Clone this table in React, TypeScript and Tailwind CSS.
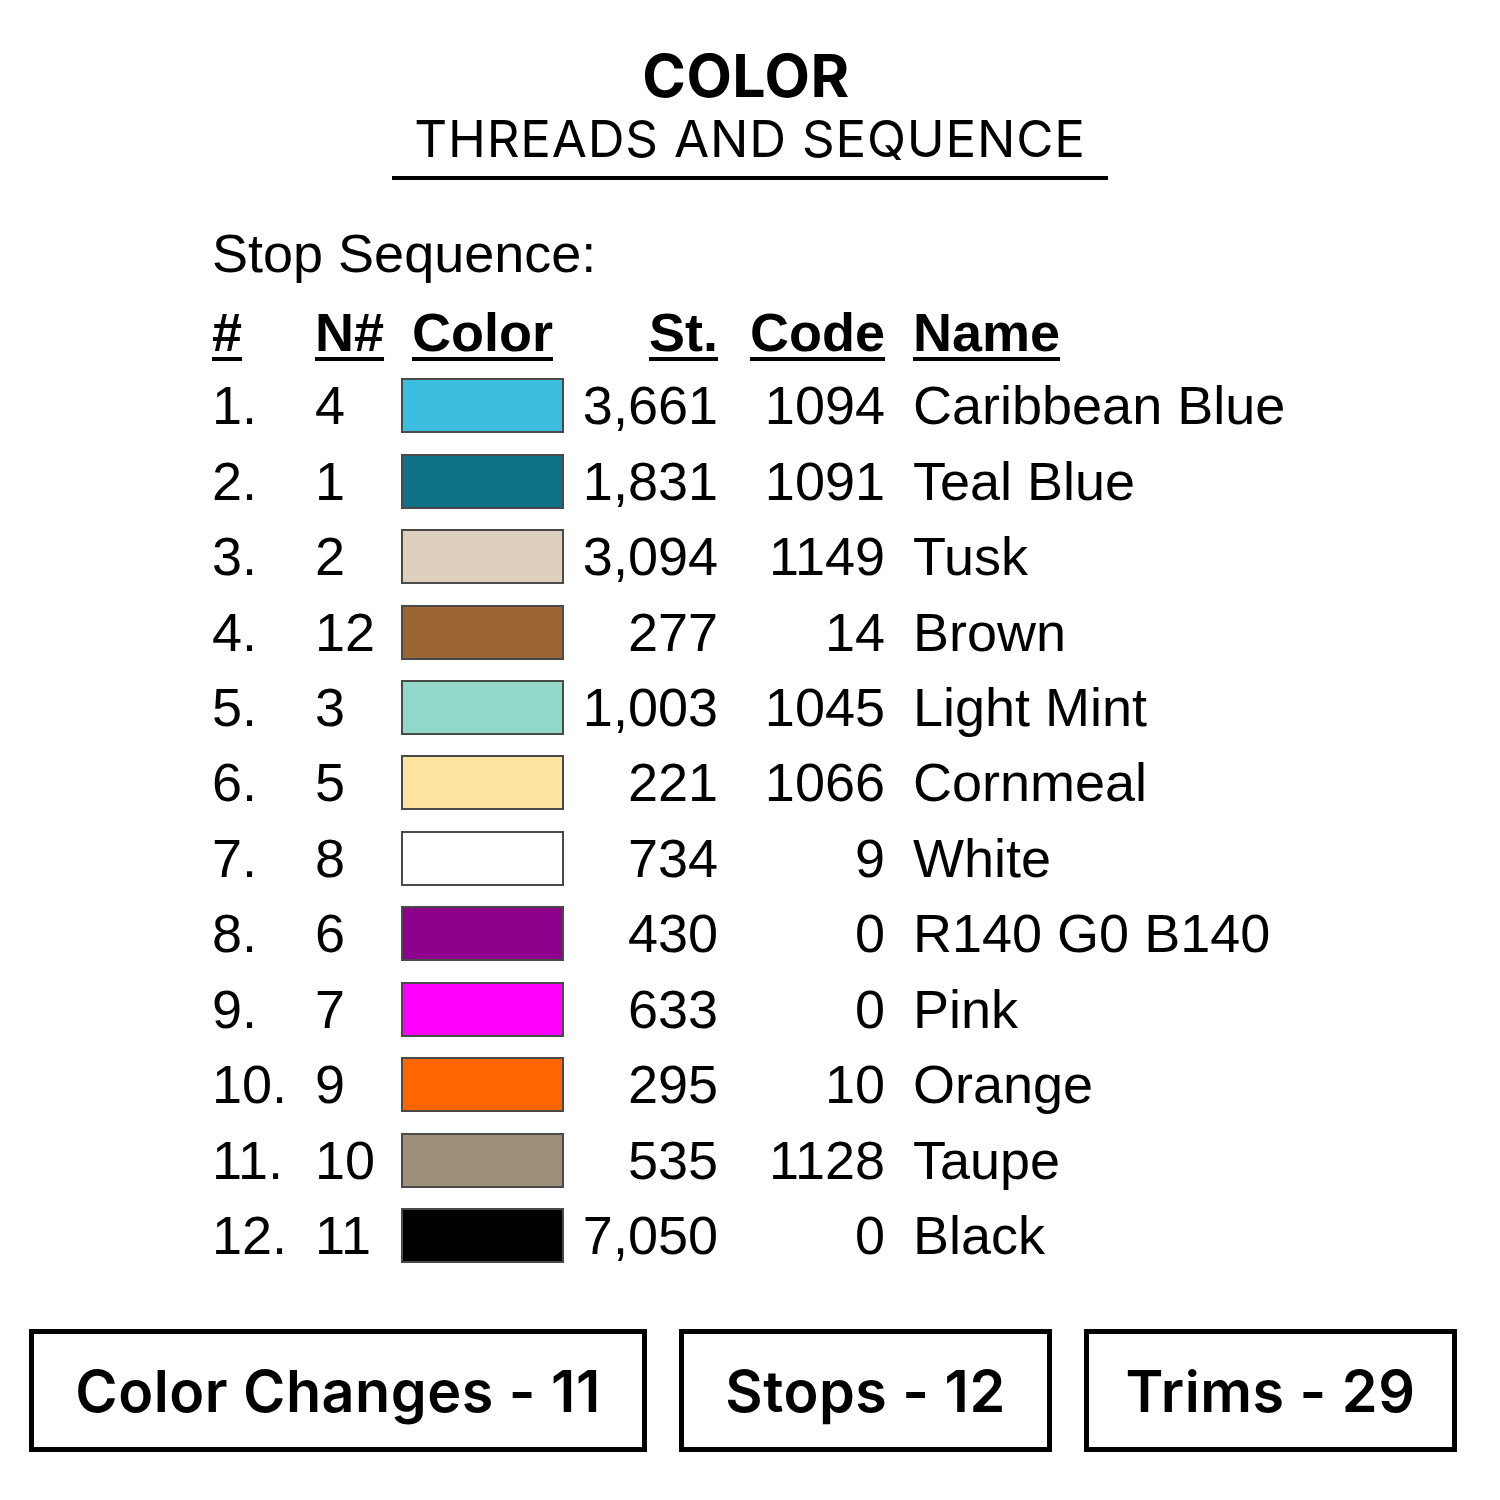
const rows = [
  { n: "1.", nn: "4", color: "#3bbde0", st: "3,661", code: "1094", name: "Caribbean Blue" },
  { n: "2.", nn: "1", color: "#0d7188", st: "1,831", code: "1091", name: "Teal Blue" },
  { n: "3.", nn: "2", color: "#dccfbb", st: "3,094", code: "1149", name: "Tusk" },
  { n: "4.", nn: "12", color: "#9b6536", st: "277", code: "14", name: "Brown" },
  { n: "5.", nn: "3", color: "#91d8c8", st: "1,003", code: "1045", name: "Light Mint" },
  { n: "6.", nn: "5", color: "#fde3a0", st: "221", code: "1066", name: "Cornmeal" },
  { n: "7.", nn: "8", color: "#ffffff", st: "734", code: "9", name: "White" },
  { n: "8.", nn: "6", color: "#8c008c", st: "430", code: "0", name: "R140 G0 B140" },
  { n: "9.", nn: "7", color: "#ff00ff", st: "633", code: "0", name: "Pink" },
  { n: "10.", nn: "9", color: "#ff6600", st: "295", code: "10", name: "Orange" },
  { n: "11.", nn: "10", color: "#9e8f7b", st: "535", code: "1128", name: "Taupe" },
  { n: "12.", nn: "11", color: "#000000", st: "7,050", code: "0", name: "Black" },
];

const cols = "grid grid-cols-[103px_86px_163px_154px_167px_1fr]";

function Stat({ label, className }: { label: string; className: string }) {
  return (
    <div
      className={`flex h-[123px] items-center justify-center border-[5px] border-black font-['Inter',sans-serif] text-[57.5px] font-semibold tracking-[0.5px] ${className}`}
    >
      {label}
    </div>
  );
}

export default function App() {
  return (
    <div className="h-[1500px] w-[1500px] bg-white text-black">
      <div className="flex flex-col items-center pt-[40px] font-['Inter',sans-serif]">
        <div className="pr-[8px] text-[59px] font-bold leading-[72px] tracking-[0.5px]">COLOR</div>
        <div className="mt-[-4px] w-[716px] border-b-[4px] border-black pb-[6px] text-center text-[51px] font-normal leading-[62px] tracking-[0.8px]">
          THREADS AND SEQUENCE
        </div>
      </div>

      <div className="pl-[212px] pt-[38px] font-['Liberation_Sans',Arial,sans-serif] text-[54px]">
        <div className="leading-[70px]">Stop Sequence:</div>
        <div className={`${cols} mt-[12px] font-bold leading-[64px]`}>
          <span className="underline decoration-[4px] underline-offset-[6px]">#</span>
          <span className="underline decoration-[4px] underline-offset-[6px]">N#</span>
          <span className="pl-[11px] underline decoration-[4px] underline-offset-[6px]">Color</span>
          <span className="text-right">
            <span className="underline decoration-[4px] underline-offset-[6px]">St.</span>
          </span>
          <span className="text-right">
            <span className="underline decoration-[4px] underline-offset-[6px]">Code</span>
          </span>
          <span className="pl-[28px]">
            <span className="underline decoration-[4px] underline-offset-[6px]">Name</span>
          </span>
        </div>
        <div className="mt-[4px]">
          {rows.map((r) => (
            <div key={r.n} className={`${cols} h-[75.45px] items-center leading-[75px]`}>
              <span>{r.n}</span>
              <span>{r.nn}</span>
              <span
                className="h-[55px] w-[163px] border-2 border-[#4a4a4a]"
                style={{ backgroundColor: r.color }}
              />
              <span className="text-right">{r.st}</span>
              <span className="text-right">{r.code}</span>
              <span className="pl-[28px]">{r.name}</span>
            </div>
          ))}
        </div>
      </div>

      <div className="mt-[56px] flex gap-[32px] pl-[29px]">
        <Stat label="Color Changes - 11" className="w-[618px]" />
        <Stat label="Stops - 12" className="w-[373px]" />
        <Stat label="Trims - 29" className="w-[373px]" />
      </div>
    </div>
  );
}
